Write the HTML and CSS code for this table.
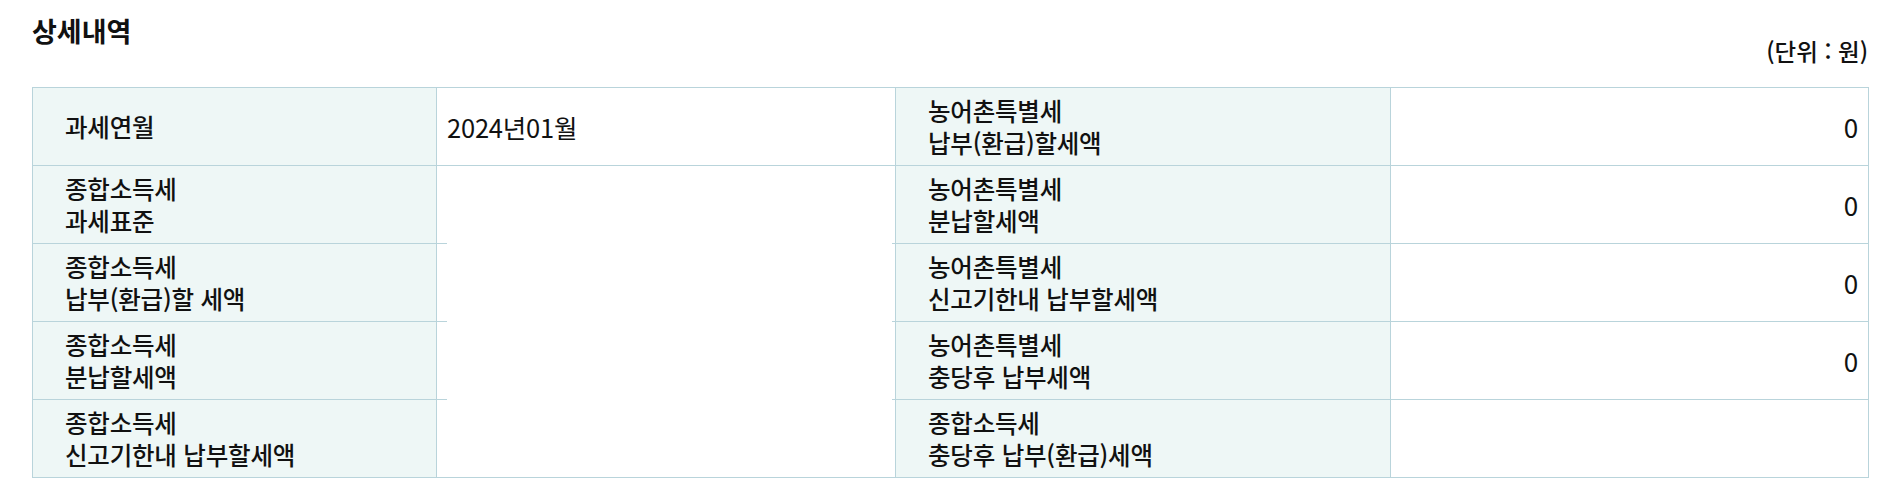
FILE: index.html
```html
<!DOCTYPE html>
<html lang="ko">
<head>
<meta charset="utf-8">
<title>상세내역</title>
<link rel="stylesheet" href="styles.css">
</head>
<body>
<div class="page">
  <div class="head">
    <h2 class="title">상세내역</h2>
    <span class="unit">(단위 : 원)</span>
  </div>
  <table class="detail">
    <colgroup>
      <col class="c1"><col class="c2"><col class="c3"><col class="c4">
    </colgroup>
    <tbody>
      <tr>
        <th>과세연월</th>
        <td class="val">2024년01월</td>
        <th>농어촌특별세<br>납부(환급)할세액</th>
        <td class="num">0</td>
      </tr>
      <tr>
        <th>종합소득세<br>과세표준</th>
        <td class="val" rowspan="4"></td>
        <th>농어촌특별세<br>분납할세액</th>
        <td class="num">0</td>
      </tr>
      <tr>
        <th class="ext">종합소득세<br>납부(환급)할 세액</th>
        <th class="ext-r">농어촌특별세<br>신고기한내 납부할세액</th>
        <td class="num">0</td>
      </tr>
      <tr>
        <th class="ext">종합소득세<br>분납할세액</th>
        <th class="ext-r">농어촌특별세<br>충당후 납부세액</th>
        <td class="num">0</td>
      </tr>
      <tr>
        <th class="ext">종합소득세<br>신고기한내 납부할세액</th>
        <th class="ext-r">종합소득세<br>충당후 납부(환급)세액</th>
        <td class="num"></td>
      </tr>
    </tbody>
  </table>
</div>
</body>
</html>
```

FILE: styles.css
```css
html, body {
  margin: 0;
  padding: 0;
  background: #ffffff;
}

.page {
  padding: 0 18px 0 32px;
  font-family: "Noto Sans CJK KR", "Noto Sans", sans-serif;
  color: #111111;
}

.head {
  display: flex;
  justify-content: space-between;
  align-items: flex-start;
  height: 66px;
  margin-bottom: 21px;
}

.title {
  margin: 12px 0 0 0;
  font-size: 27px;
  line-height: 38px;
  font-weight: 700;
}

.unit {
  margin-top: 35px;
  font-size: 23.5px;
  line-height: 32px;
  font-weight: 500;
}

.detail {
  width: 1836px;
  border-collapse: collapse;
  table-layout: fixed;
}

.c1 { width: 404px; }
.c2 { width: 459px; }
.c3 { width: 495px; }
.c4 { width: 478px; }

.detail th,
.detail td {
  border: 1px solid #b9d4db;
  height: 77px;
  padding: 0;
  vertical-align: middle;
  font-size: 24.5px;
  line-height: 32px;
  letter-spacing: -0.2px;
}

.detail th {
  background: #eef7f6;
  text-align: left;
  font-weight: 500;
  padding-left: 32px;
  position: relative;
}

.detail .val {
  padding-left: 10px;
  font-size: 25.5px;
  font-weight: 400;
}

.detail .num {
  text-align: right;
  padding-right: 10px;
  font-size: 26px;
  font-weight: 400;
}

.detail .ext::after {
  content: "";
  position: absolute;
  top: -1px;
  right: -11px;
  width: 11px;
  height: 1px;
  background: #b9d4db;
}

.detail .ext-r::after {
  content: "";
  position: absolute;
  top: -1px;
  left: -4px;
  width: 4px;
  height: 1px;
  background: #b9d4db;
}
```
